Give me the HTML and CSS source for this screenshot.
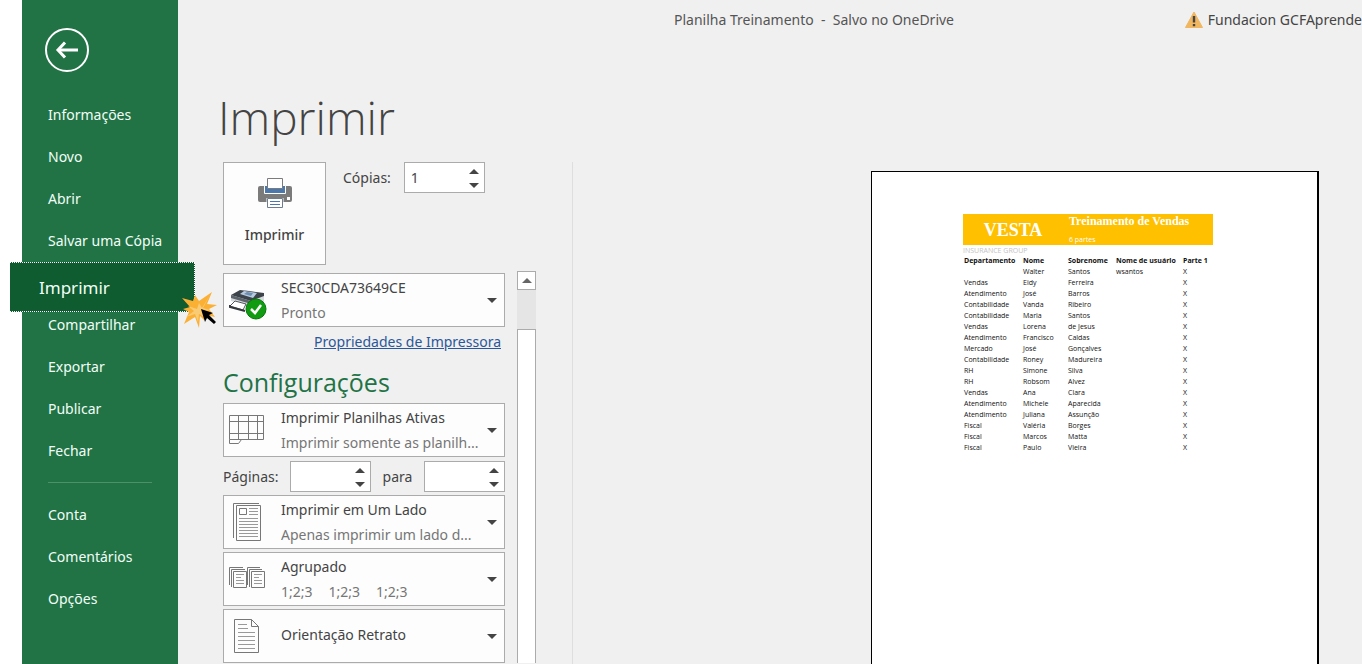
FILE: index.html
```html
<!DOCTYPE html>
<html lang="pt-BR">
<head>
<meta charset="utf-8">
<meta name="viewport" content="width=device-width, initial-scale=1">
<title>Imprimir - Planilha Treinamento</title>
<link rel="stylesheet" href="styles.css">
</head>
<body>
<div class="app">
  <nav class="sidebar" aria-label="Arquivo">
    <button class="back" type="button" aria-label="Voltar">
      <svg width="44" height="44" viewBox="0 0 44 44" fill="none" stroke="#fff"><circle cx="22" cy="22" r="21" stroke-width="2"/><path d="M33 22H14" stroke-width="3"/><path d="M20 14.500L13 22l7 7.500" stroke-width="3"/></svg>
    </button>
    <ul class="menu">
      <li><a href="#info">Informações</a></li>
      <li><a href="#novo">Novo</a></li>
      <li><a href="#abrir">Abrir</a></li>
      <li><a href="#copia">Salvar uma Cópia</a></li>
      <li class="current"><a href="#imprimir" aria-current="page">Imprimir</a>
        <svg class="click" width="38" height="40" viewBox="0 0 38 40" aria-hidden="true"><path fill="#fbb034" d="M32 2l-5 12 10 1-8 4 6 8-9-2-2 5-4-4-1 12-4-11-11 7 5-12-6-3 7-2-8-9 11 3 2-6 4 6z"/><path fill="#f9cb74" d="M30 5l-8 13-3-5-2 6-9-3 6 5-8 6 9-3 3 8 1-8 6 3-3-5 8-2-7-2z"/><path fill="#000" d="M21 19l12 4-4 2 7 7-2 2-7-6-2 4z"/></svg>
      </li>
      <li><a href="#compartilhar">Compartilhar</a></li>
      <li><a href="#exportar">Exportar</a></li>
      <li><a href="#publicar">Publicar</a></li>
      <li><a href="#fechar">Fechar</a></li>
    </ul>
    <hr class="rule">
    <ul class="menu">
      <li><a href="#conta">Conta</a></li>
      <li><a href="#comentarios">Comentários</a></li>
      <li><a href="#opcoes">Opções</a></li>
    </ul>
  </nav>

  <main class="main">
    <header class="topbar">
      <span class="doc">Planilha Treinamento &nbsp;-&nbsp; Salvo no OneDrive</span>
      <span class="user"><svg width="20" height="18" viewBox="0 0 20 18" aria-hidden="true"><path d="M10 1l8.500 15.500h-17z" fill="#f0b660" stroke="#f0b660" stroke-linejoin="round"/><path d="M10 5v6.500M10 13v2.200" stroke="#444" stroke-width="2.400"/></svg>Fundacion GCFAprende</span>
    </header>
    <h1 class="title">Imprimir</h1>
    <div class="body">
      <section class="options">
        <div class="run">
          <button class="print" type="button">
            <svg width="36" height="32" viewBox="0 0 36 32" aria-hidden="true"><rect x="1" y="9" width="34" height="16" rx="2" fill="#7b7b7b"/><path d="M7.500 8.500h21v8h-21z" fill="#4a78ac" stroke="#fff"/><path d="M10.500 1.500h15v10h-15z" fill="#fff" stroke="#7b7b7b"/><rect x="30" y="20" width="3" height="3" fill="#fff"/><path d="M9.500 21h17v10h-17z" fill="#fff"/><path d="M10.500 21.500h15v9h-15z" fill="#fff" stroke="#6d7c8e"/><path d="M13 24.500h10M13 27.500h10" stroke="#4a78ac"/></svg>
            <span>Imprimir</span>
          </button>
          <div class="copies">
            <label for="copies">Cópias:</label>
            <span class="spin"><input id="copies" type="text" inputmode="numeric" value="1"><span class="steps"><button type="button" class="up" aria-label="Mais cópias"></button><button type="button" class="down" aria-label="Menos cópias"></button></span></span>
          </div>
        </div>

        <div class="scroll">
          <div class="settings">
            <button class="tile" type="button" aria-haspopup="listbox">
              <svg width="46" height="40" viewBox="0 0 46 40" aria-hidden="true"><path d="M7 15l15-5 18 4v8l-12 5-21-6z" fill="#d5d8dc"/><path d="M7 15l9-5 24 3v3l-13 5z" fill="#3d434a"/><path d="M16 14l4-3 13 2-4 5z" fill="#b5cbe0"/><path d="M20 14l3-2 6 1-2 3z" fill="#6f8dae"/><path d="M7 15l20 6v3L7 18z" fill="#5e646b"/><path d="M11 21l-5 5 13 4 3-6z" fill="#fff" stroke="#50555b"/><path d="M6 25v2l15 4" fill="none" stroke="#34383d" stroke-width="2"/><circle cx="32" cy="29" r="10" fill="#109b12" stroke="#07780b"/><path d="M27 29l4 4 6-8" fill="none" stroke="#fff" stroke-width="2.500"/></svg>
              <span class="text"><span class="name">SEC30CDA73649CE</span><span class="note">Pronto</span></span>
            </button>
            <a class="props" href="#propriedades">Propriedades de Impressora</a>
            <h2 class="subtitle">Configurações</h2>
            <button class="tile" type="button" aria-haspopup="listbox">
              <svg width="46" height="40" viewBox="0 0 46 40" fill="none" stroke="#777" aria-hidden="true"><path d="M5.500 5.500h34v24h-34zM5.500 11.500h34M5.500 23.500h34M14.500 5.500v24M24.500 5.500v24M33.500 5.500v24M5.500 29.500v4h9l3-4"/></svg>
              <span class="text"><span class="name">Imprimir Planilhas Ativas</span><span class="note">Imprimir somente as planilh...</span></span>
            </button>
            <div class="pages">
              <label for="from">Páginas:</label>
              <span class="spin"><input id="from" type="text" inputmode="numeric"><span class="steps"><button type="button" class="up" aria-label="Aumentar página inicial"></button><button type="button" class="down" aria-label="Diminuir página inicial"></button></span></span>
              <label for="to">para</label>
              <span class="spin"><input id="to" type="text" inputmode="numeric"><span class="steps"><button type="button" class="up" aria-label="Aumentar página final"></button><button type="button" class="down" aria-label="Diminuir página final"></button></span></span>
            </div>
            <div class="stack">
              <button class="tile" type="button" aria-haspopup="listbox">
                <svg width="46" height="40" viewBox="0 0 46 40" fill="none" stroke="#777" aria-hidden="true"><path d="M35 1.500H9.500V36M12.500 3.500h24v35h-24zM15.500 6.500h7v6h-7z"/><path stroke="#999" d="M25 6.500h9M25 9.500h9M25 12.500h9M15 16.500h19M15 19.500h19M15 22.500h19M15 25.500h19M15 28.500h19M15 31.500h19M15 34.500h19"/></svg>
                <span class="text"><span class="name">Imprimir em Um Lado</span><span class="note">Apenas imprimir um lado d...</span></span>
              </button>
              <button class="tile" type="button" aria-haspopup="listbox">
                <svg width="46" height="40" viewBox="0 0 46 40" fill="none" stroke="#777" aria-hidden="true"><path d="M5.500 26V8.500H19M7.500 28V10.500H21M9.500 12.500h13v16h-13zM23.500 26V8.500H36M25.500 28V10.500H38M27.500 12.500h13v16h-13z"/><path stroke="#999" d="M12 15.500h8M12 18.500h5M12 21.500h8M12 24.500h8M30 15.500h8M30 18.500h5M30 21.500h8M30 24.500h8"/></svg>
                <span class="text"><span class="name">Agrupado</span><span class="note sets"><span>1;2;3</span><span>1;2;3</span><span>1;2;3</span></span></span>
              </button>
              <button class="tile" type="button" aria-haspopup="listbox">
                <svg width="46" height="40" viewBox="0 0 46 40" fill="none" stroke="#777" aria-hidden="true"><path d="M10.500 3.500h17l7 7v26h-24zM27.500 3.500v7h7"/><path stroke="#999" d="M14 8.500h9M14 12.500h10M14 16.500h17M14 20.500h17M14 24.500h17M14 28.500h17M14 32.500h17"/></svg>
                <span class="text single"><span class="name">Orientação Retrato</span></span>
              </button>
            </div>
          </div>
          <div class="scrollbar">
            <button class="scroll-up" type="button" aria-label="Rolar para cima"></button>
            <div class="thumb"></div>
          </div>
        </div>
      </section>

      <section class="preview" aria-label="Visualização">
        <article class="paper">
          <div class="banner">
            <strong class="brand">VESTA</strong>
            <div class="course"><strong>Treinamento de Vendas</strong><span>6 partes</span></div>
          </div>
          <p class="group">INSURANCE GROUP</p>
          <table class="sheet">
            <colgroup><col class="c1"><col class="c2"><col class="c3"><col class="c4"><col class="c5"></colgroup>
            <thead><tr><th>Departamento</th><th>Nome</th><th>Sobrenome</th><th>Nome de usuário</th><th>Parte 1</th></tr></thead>
            <tbody>
              <tr><td></td><td>Walter</td><td>Santos</td><td>wsantos</td><td>X</td></tr>
              <tr><td>Vendas</td><td>Eidy</td><td>Ferreira</td><td></td><td>X</td></tr>
              <tr><td>Atendimento</td><td>José</td><td>Barros</td><td></td><td>X</td></tr>
              <tr><td>Contabilidade</td><td>Vanda</td><td>Ribeiro</td><td></td><td>X</td></tr>
              <tr><td>Contabilidade</td><td>Maria</td><td>Santos</td><td></td><td>X</td></tr>
              <tr><td>Vendas</td><td>Lorena</td><td>de Jesus</td><td></td><td>X</td></tr>
              <tr><td>Atendimento</td><td>Francisco</td><td>Caldas</td><td></td><td>X</td></tr>
              <tr><td>Mercado</td><td>José</td><td>Gonçalves</td><td></td><td>X</td></tr>
              <tr><td>Contabilidade</td><td>Roney</td><td>Madureira</td><td></td><td>X</td></tr>
              <tr><td>RH</td><td>Simone</td><td>Silva</td><td></td><td>X</td></tr>
              <tr><td>RH</td><td>Robsom</td><td>Alvez</td><td></td><td>X</td></tr>
              <tr><td>Vendas</td><td>Ana</td><td>Clara</td><td></td><td>X</td></tr>
              <tr><td>Atendimento</td><td>Michele</td><td>Aparecida</td><td></td><td>X</td></tr>
              <tr><td>Atendimento</td><td>Juliana</td><td>Assunção</td><td></td><td>X</td></tr>
              <tr><td>Fiscal</td><td>Valéria</td><td>Borges</td><td></td><td>X</td></tr>
              <tr><td>Fiscal</td><td>Marcos</td><td>Matta</td><td></td><td>X</td></tr>
              <tr><td>Fiscal</td><td>Paulo</td><td>Vieira</td><td></td><td>X</td></tr>
            </tbody>
          </table>
        </article>
      </section>
    </div>
  </main>
</div>
</body>
</html>
```

FILE: styles.css
```css
* { box-sizing: border-box; }
body { margin: 0; background: #fff; color: #444; font: 14px/24px "Noto Sans", "Open Sans", sans-serif; }
button, input { font: inherit; color: inherit; }
button { margin: 0; padding: 0; border: 0; background: none; cursor: pointer; }
ul, p, h1, h2 { margin: 0; padding: 0; list-style: none; font-weight: 400; }
svg { display: block; flex: none; }

.app { display: flex; min-height: 100vh; padding-left: 22px; }

.sidebar { flex: none; width: 156px; padding-top: 28px; background: #217346; color: #fff; position: relative; z-index: 1; }
.back { display: block; margin: 0 0 22px 23px; }
.menu a { display: block; height: 42px; padding-left: 26px; line-height: 42px; color: #f2fff7; text-decoration: none; white-space: nowrap; }
.menu .current { position: relative; margin: 0 -17px -8px -12px; }
.menu .current a { height: 50px; padding-left: 29px; border: 1px dotted #fff; border-left: 0; background: #0e5c2f; line-height: 50px; font-size: 17px; }
.click { position: absolute; right: -23px; bottom: -18px; }
.rule { margin: 10px 26px 11px; border: 0; border-top: 1px solid #4d9069; }

.main { flex: 1; min-width: 0; display: flex; flex-direction: column; background: #f0f0f0; }
.topbar { display: grid; grid-template-columns: 1fr auto 1fr; align-items: center; height: 40px; padding-left: 88px; white-space: nowrap; }
.doc { grid-column: 2; color: #555; }
.user { display: flex; align-items: center; justify-content: flex-end; gap: 4px; }
.title { padding: 47px 0 15px 40px; font-family: "Open Sans", "Noto Sans", sans-serif; font-size: 46px; line-height: 60px; font-weight: 300; }
.body { flex: 1; display: flex; }

.options { flex: none; width: 395px; padding-left: 45px; border-right: 1px solid #dedede; }
.run { display: flex; align-items: flex-start; gap: 17px; }
.print { display: flex; flex-direction: column; align-items: center; gap: 14px; width: 103px; height: 103px; padding-bottom: 3px; border: 1px solid #ababab; background: #fdfdfd; font-weight: 500; justify-content: center; }
.copies { display: flex; align-items: center; gap: 13px; }
.spin { display: flex; width: 81px; height: 31px; border: 1px solid #ababab; background: #fff; }
.spin input { flex: 1; width: 0; border: 0; padding: 0 6px; background: none; outline: 0; }
.steps { display: flex; flex-direction: column; justify-content: space-between; width: 20px; padding: 4px 0; }
.steps button { display: flex; justify-content: center; width: 20px; height: 7px; }
.steps button::before, .scroll-up::before, .tile::after { content: ""; border: 5px solid transparent; }
.steps .up::before, .scroll-up::before { border-top: 0; border-bottom-color: #444; }
.steps .down { align-items: flex-end; }
.steps .down::before, .tile::after { border-bottom: 0; border-top-color: #444; }
.scroll-up::before { border-bottom-color: #666; }

.scroll { display: flex; gap: 12px; padding-top: 6px; }
.settings { width: 282px; padding-top: 2px; }
.tile { display: flex; align-items: center; width: 100%; height: 54px; padding: 0 7px 0 0; border: 1px solid #ababab; background: #fdfdfd; text-align: left; }
.tile .text { flex: 1; min-width: 0; margin: 0 0 0 11px; }
.tile .single { padding-bottom: 4px; }
.name, .note { display: block; height: 25px; line-height: 25px; overflow: hidden; white-space: nowrap; }
.note { color: #767676; }
.note.sets { display: flex; gap: 16px; }
.props { display: block; margin-right: 4px; line-height: 30px; text-align: right; color: #2b579a; }
.subtitle { padding: 9px 0 5px; font-family: "Open Sans", "Noto Sans", sans-serif; font-size: 25px; line-height: 32px; color: #217346; }
.pages { display: flex; align-items: center; justify-content: space-between; padding: 4px 0 3px; }
.stack { display: grid; grid-template-columns: minmax(0, 1fr); gap: 3px; }

.scrollbar { display: flex; flex-direction: column; width: 19px; background: #e5e5e5; }
.scroll-up { display: flex; align-items: center; justify-content: center; height: 19px; border: 1px solid #ababab; background: #fff; }
.thumb { flex: 1; margin-top: 39px; border: 1px solid #ababab; border-bottom: 0; background: #fff; }

.preview { flex: 1; display: flex; justify-content: flex-end; padding: 9px 43px 0 0; }
.paper { width: 448px; padding: 42px 0 0 91px; border: solid #000; border-width: 1px 2px 0 1px; background: #fff; color: #111; font: 7px/11px "Open Sans", "Noto Sans", sans-serif; }
.banner { display: grid; grid-template-columns: 100px 1fr; align-items: center; width: 250px; height: 31px; background: #ffc000; color: #fff; }
.brand { text-align: center; font: bold 18px/28px "Liberation Serif", serif; }
.course { padding-left: 6px; }
.course strong, .course span { display: block; height: 16px; line-height: 14px; }
.course span { line-height: 20px; }
.course strong { font-family: "Liberation Serif", serif; font-size: 12px; }
.group { color: #c4c4c4; }
.sheet { width: 250px; table-layout: fixed; border-collapse: collapse; }
.sheet th, .sheet td { height: 11px; padding: 0 0 0 1px; line-height: 11px; text-align: left; white-space: nowrap; }
.sheet th { height: 10px; line-height: 10px; }
.c1 { width: 59px; }
.c2 { width: 45px; }
.c3 { width: 48px; }
.c4 { width: 67px; }
.c5 { width: 31px; }
```
